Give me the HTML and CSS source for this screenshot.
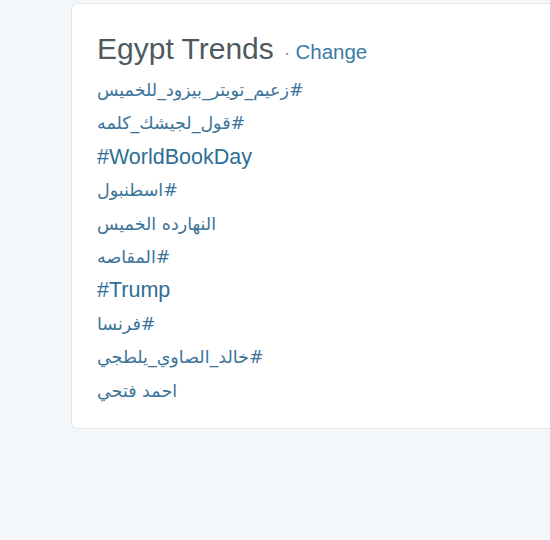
FILE: index.html
```html
<!DOCTYPE html>
<html>
<head>
<meta charset="utf-8">
<link rel="stylesheet" href="styles.css">
</head>
<body>
<div class="card">
  <div class="head">
    <span class="title">Egypt Trends</span>
    <span class="dot">·</span>
    <a class="change">Change</a>
  </div>
  <ul class="trends">
    <li><a class="ar" dir="auto">#زعيم_تويتر_بيزود_للخميس</a></li>
    <li><a class="ar" dir="auto">#قول_لجيشك_كلمه</a></li>
    <li><a class="en">#WorldBookDay</a></li>
    <li><a class="ar" dir="auto">#اسطنبول</a></li>
    <li><a class="ar" dir="auto">النهارده الخميس</a></li>
    <li><a class="ar" dir="auto">#المقاصه</a></li>
    <li><a class="en">#Trump</a></li>
    <li><a class="ar" dir="auto">#فرنسا</a></li>
    <li><a class="ar" dir="auto">#خالد_الصاوي_يلطجي</a></li>
    <li><a class="ar" dir="auto">احمد فتحي</a></li>
  </ul>
</div>
</body>
</html>
```
FILE: styles.css
```css
html, body {
  margin: 0;
  padding: 0;
  background: #f4f7f9;
  overflow: hidden;
  height: 540px;
}
.card {
  margin: 3px 0 0 71px;
  width: 479px;
  height: 426px;
  box-sizing: border-box;
  background: #ffffff;
  border: 1px solid #e1e8ed;
  border-right: none;
  border-radius: 6px 0 0 6px;
  padding: 27px 0 0 25px;
  font-family: "Liberation Sans", Arial, sans-serif;
}
.head {
  display: flex;
  align-items: baseline;
  height: 43px;
}
.title {
  font-size: 30px;
  color: #4e5961;
  line-height: 36px;
}
.dot {
  font-size: 20px;
  color: #8899a6;
  margin: 0 5px 0 10px;
}
.change {
  font-size: 20.5px;
  color: #3a7aa3;
}
.trends {
  list-style: none;
  margin: 0;
  padding: 0;
}
.trends li {
  height: 33.4px;
  line-height: 33.4px;
  text-align: left;
}
.en {
  font-size: 21.5px;
  color: #2f6e96;
}
.ar {
  font-family: "DejaVu Sans", sans-serif;
  font-size: 17.5px;
  color: #3b7399;
}
```
